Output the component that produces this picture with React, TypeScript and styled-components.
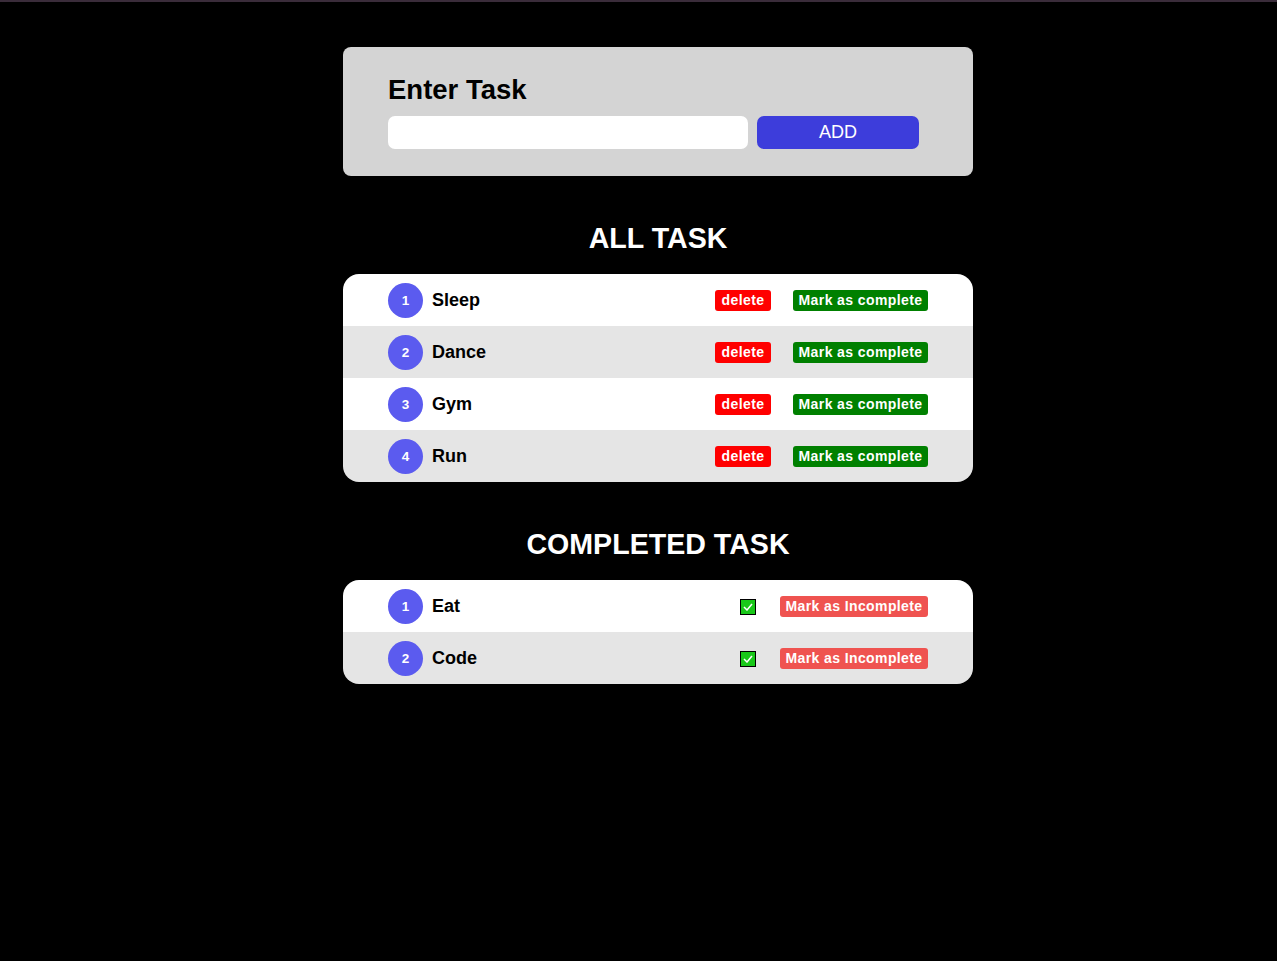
import React from "react";
import styled, { createGlobalStyle } from "styled-components";

const Global = createGlobalStyle`
  html, body { margin: 0; padding: 0; background: #000; }
  body { font-family: "Liberation Sans", Arial, sans-serif; min-height: 961px; border-top: 2px solid #3a2c3a; box-sizing: border-box; }
`;

const Page = styled.main`
  width: 630px;
  margin: 45px 0 0 343px;
  display: flex;
  flex-direction: column;
`;

const InputCard = styled.section`
  background: #d4d4d4;
  border-radius: 8px;
  padding: 26px 45px 27px;
`;

const CardTitle = styled.h2`
  margin: 0 0 10px;
  font-size: 27.5px;
  line-height: 33px;
  font-weight: bold;
  color: #000;
`;

const FormRow = styled.div`
  display: flex;
  gap: 9px;
`;

const TextInput = styled.input`
  width: 360px;
  height: 33px;
  border: none;
  border-radius: 7px;
  background: #fff;
  box-sizing: border-box;
  padding: 0 10px;
  font-family: inherit;
  outline: none;
`;

const AddButton = styled.button`
  width: 162px;
  height: 33px;
  border: none;
  border-radius: 7px;
  background: #3d3ddb;
  color: #fff;
  font-family: "Liberation Sans", Arial, sans-serif;
  font-size: 18px;
`;

const Heading = styled.h1`
  margin: 0;
  text-align: center;
  color: #fff;
  font-size: 28.6px;
  font-weight: bold;
  line-height: 32px;
  padding: 46px 0 20px;
`;

const List = styled.ul`
  list-style: none;
  margin: 0;
  padding: 0;
  border-radius: 16px;
  overflow: hidden;
`;

const Row = styled.li<{ $alt: boolean }>`
  height: 52px;
  display: flex;
  align-items: center;
  padding: 0 45px;
  background: ${(p) => (p.$alt ? "#e5e5e5" : "#fff")};
`;

const Num = styled.span`
  width: 35px;
  height: 35px;
  border-radius: 50%;
  background: #5b5bef;
  color: #fff;
  font-size: 13.5px;
  font-weight: bold;
  display: flex;
  align-items: center;
  justify-content: center;
  flex-shrink: 0;
`;

const Name = styled.span`
  margin-left: 9px;
  font-size: 18px;
  font-weight: bold;
  color: #000;
  flex: 1;
`;

const SmallButton = styled.button<{ $bg: string; $w: number }>`
  width: ${(p) => p.$w}px;
  height: 21px;
  border: none;
  border-radius: 3px;
  background: ${(p) => p.$bg};
  color: #fff;
  font-family: "Liberation Sans", Arial, sans-serif;
  font-weight: bold;
  font-size: 14px;
  letter-spacing: 0.4px;
  padding: 0;
  display: flex;
  align-items: center;
  justify-content: center;
`;

const Gap = styled.span<{ $w: number }>`
  width: ${(p) => p.$w}px;
  flex-shrink: 0;
`;

const Check = styled.span`
  width: 14px;
  height: 14px;
  margin-top: 2px;
  background: #19c819;
  border: 1px solid #000;
  display: flex;
  align-items: center;
  justify-content: center;
`;

const tasks = ["Sleep", "Dance", "Gym", "Run"];
const done = ["Eat", "Code"];

export default function App() {
  return (
    <>
      <Global />
      <Page>
        <InputCard>
          <CardTitle>Enter Task</CardTitle>
          <FormRow>
            <TextInput />
            <AddButton>ADD</AddButton>
          </FormRow>
        </InputCard>
        <Heading>ALL TASK</Heading>
        <List>
          {tasks.map((t, i) => (
            <Row key={t} $alt={i % 2 === 1}>
              <Num>{i + 1}</Num>
              <Name>{t}</Name>
              <SmallButton $bg="#ff0000" $w={56}>delete</SmallButton>
              <Gap $w={22} />
              <SmallButton $bg="#008000" $w={135}>Mark as complete</SmallButton>
            </Row>
          ))}
        </List>
        <Heading>COMPLETED TASK</Heading>
        <List>
          {done.map((t, i) => (
            <Row key={t} $alt={i % 2 === 1}>
              <Num>{i + 1}</Num>
              <Name>{t}</Name>
              <Check>
                <svg width="10" height="8" viewBox="0 0 10 8">
                  <path d="M1 4 L4 7 L9 1" stroke="#fff" strokeWidth="1.5" fill="none" />
                </svg>
              </Check>
              <Gap $w={24} />
              <SmallButton $bg="#ef5350" $w={148}>Mark as Incomplete</SmallButton>
            </Row>
          ))}
        </List>
      </Page>
    </>
  );
}
